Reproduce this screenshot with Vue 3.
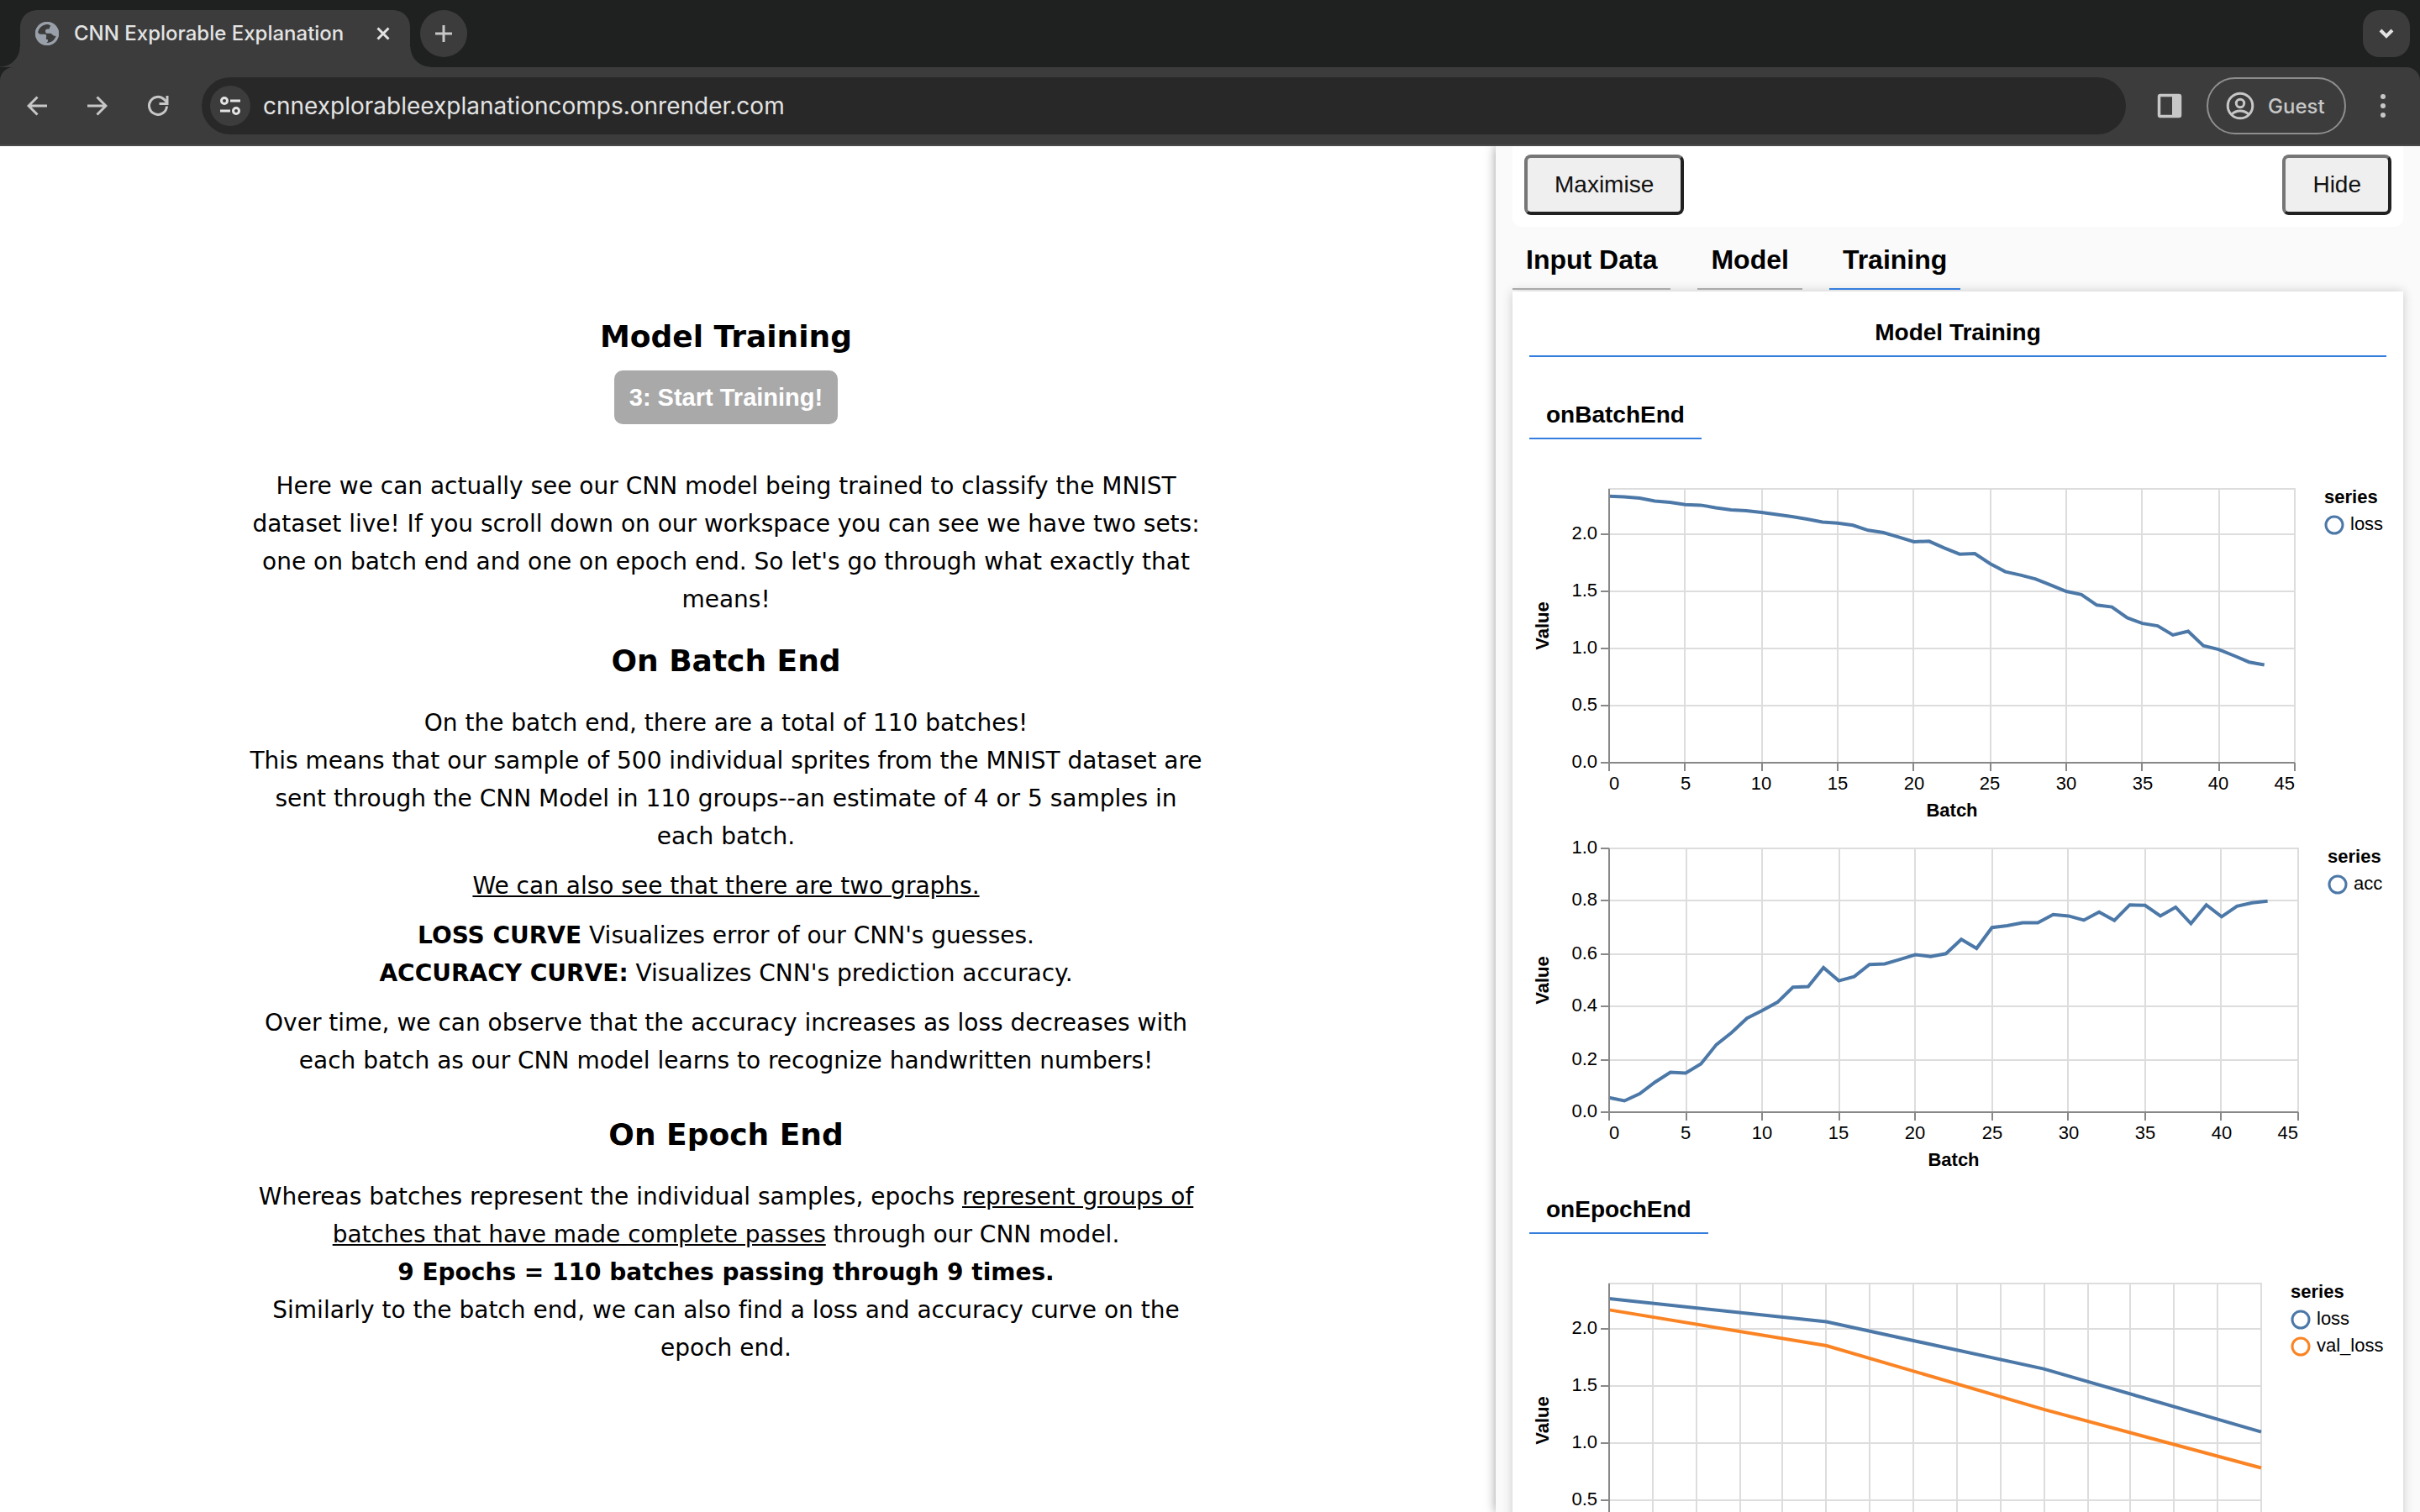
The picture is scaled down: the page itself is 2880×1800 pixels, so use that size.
<script setup>
import { ref } from 'vue'

const BLUE = '#4c78a8'
const ORANGE = '#fa8424'

const tabs = ['Input Data', 'Model', 'Training']
const activeTab = ref('Training')

const lossPerBatch = [
  2.336, 2.331, 2.319, 2.294, 2.282, 2.262, 2.257, 2.235, 2.216, 2.208, 2.194,
  2.176, 2.157, 2.135, 2.11, 2.1, 2.081, 2.037, 2.017, 1.978, 1.936, 1.941,
  1.882, 1.828, 1.833, 1.745, 1.674, 1.645, 1.61, 1.556, 1.502, 1.473, 1.382,
  1.365, 1.27, 1.221, 1.199, 1.12, 1.152, 1.025, 0.993, 0.939, 0.882, 0.858,
]
const accPerBatch = [
  0.055, 0.043, 0.07, 0.114, 0.151, 0.148, 0.183, 0.256, 0.302, 0.356, 0.385,
  0.417, 0.474, 0.476, 0.548, 0.498, 0.514, 0.56, 0.562, 0.579, 0.597, 0.59,
  0.601, 0.655, 0.621, 0.7, 0.707, 0.718, 0.718, 0.749, 0.744, 0.728, 0.759,
  0.727, 0.786, 0.784, 0.744, 0.777, 0.715, 0.786, 0.741, 0.781, 0.794, 0.8,
]

const LEFT = 95
const TOP = 20

function range(count, step, start = 0) {
  return Array.from({ length: count }, (_, i) => start + i * step)
}

/* Turns a chart description into plot coordinates. */
function buildChart({ width, height, xMax, yMax, xTicks, yTicks, xTitle, series }) {
  const snap = (v) => 2 * Math.round(v / 2)
  return {
    xTitle,
    width,
    height,
    right: LEFT + width,
    bottom: TOP + height,
    viewHeight: TOP + height + 82,
    xTicks: xTicks.map((v, i) => ({
      x: LEFT + snap((v / xMax) * width),
      labelX: Math.round(LEFT + (v / xMax) * width),
      text: String(v),
      anchor: i === 0 ? 'start' : i === xTicks.length - 1 ? 'end' : 'middle',
    })),
    yTicks: yTicks.map((v) => ({
      y: TOP + snap(height - (v / yMax) * height),
      text: v.toFixed(1),
    })),
    series: series.map((s) => ({
      name: s.name,
      color: s.color,
      points: s.values
        .map((v, i) => `${(LEFT + (i / xMax) * width).toFixed(1)},${(TOP + height - (v / yMax) * height).toFixed(1)}`)
        .join(' '),
    })),
  }
}

const groups = [
  {
    name: 'onBatchEnd',
    charts: [
      buildChart({
        width: 816, height: 326, xMax: 45, yMax: 2.4, xTitle: 'Batch',
        xTicks: range(10, 5), yTicks: range(5, 0.5),
        series: [{ name: 'loss', color: BLUE, values: lossPerBatch }],
      }),
      buildChart({
        width: 820, height: 314, xMax: 45, yMax: 1, xTitle: 'Batch',
        xTicks: range(10, 5), yTicks: range(6, 0.2),
        series: [{ name: 'acc', color: BLUE, values: accPerBatch }],
      }),
    ],
  },
  {
    name: 'onEpochEnd',
    charts: [
      buildChart({
        width: 776, height: 326, xMax: 3, yMax: 2.4, xTitle: '',
        xTicks: range(16, 0.2), yTicks: range(4, 0.5, 0.5),
        series: [
          { name: 'loss', color: BLUE, values: [2.267, 2.064, 1.652, 1.1] },
          { name: 'val_loss', color: ORANGE, values: [2.169, 1.855, 1.297, 0.784] },
        ],
      }),
    ],
  },
]
</script>

<template>
  <div class="window">
    <header class="chrome">
      <div class="tab-strip">
        <div class="browser-tab">
          <svg class="favicon" viewBox="0 0 28 28" aria-hidden="true">
            <circle cx="14" cy="14" r="14" fill="#9aa0a9" />
            <path d="M15.500 2.500C10 2.500 5 6 3 11.500c0 2 1.500 3.200 4 3.200h4.200c1.600 0 2.200 1 2 2.300l-.4 2.400c0 1 .6 1.500 1.500 1.500h.6v2.600l-1.700 1.700c5.500.4 10.500-3.200 12-8.700-1.400.8-3.500.4-4.600-1-.8-1.200-2-1.700-3.600-1.700h-2.300c-1.700 0-2.700-1-2.700-2.600s.9-2.600 2.500-2.600h.8c1.200 0 1.800-.7 1.800-1.700s.7-1.600 1.500-1.800z" fill="#3c3c3c" />
            <circle cx="14" cy="14" r="12.500" fill="none" stroke="#9aa0a9" stroke-width="3" />
          </svg>
          <span class="tab-title">CNN Explorable Explanation</span>
          <button class="icon-button close" aria-label="Close tab">
            <svg viewBox="0 0 16 16" width="16" height="16"><path d="M1.500 1.500l13 13M14.500 1.500l-13 13" stroke="#e3e3e3" stroke-width="3" /></svg>
          </button>
        </div>
        <button class="icon-button new-tab" aria-label="New tab">
          <svg viewBox="0 0 20 20" width="20" height="20"><path d="M10 0v20M0 10h20" stroke="#c7c7c7" stroke-width="3" /></svg>
        </button>
        <button class="icon-button tab-search" aria-label="Search tabs">
          <svg viewBox="0 0 20 14" width="20" height="14"><path d="M3 3l7 7 7-7" fill="none" stroke="#e3e3e3" stroke-width="4" /></svg>
        </button>
      </div>
      <div class="toolbar">
        <button class="icon-button nav" aria-label="Back">
          <svg viewBox="0 0 24 24" width="24" height="24"><path d="M24 12H2M12.500 1.500L2 12l10.500 10.500" fill="none" stroke="#c7c7c7" stroke-width="3" /></svg>
        </button>
        <button class="icon-button nav" aria-label="Forward">
          <svg viewBox="0 0 24 24" width="24" height="24"><path d="M0 12h22M11.500 1.500L22 12 11.500 22.500" fill="none" stroke="#c7c7c7" stroke-width="3" /></svg>
        </button>
        <button class="icon-button nav" aria-label="Reload">
          <svg viewBox="0 0 26 26" width="26" height="26">
            <path d="M23.500 13.500A10.500 10.500 0 1 1 20.500 5.500L23.500 8.500" fill="none" stroke="#c7c7c7" stroke-width="3" />
            <path d="M24 1v9.500h-9.500" fill="none" stroke="#c7c7c7" stroke-width="3" />
          </svg>
        </button>
        <div class="omnibox">
          <button class="icon-button site-info" aria-label="View site information">
            <svg viewBox="0 0 24 22" width="24" height="22" fill="none" stroke="#e3e3e3" stroke-width="3">
              <circle cx="5" cy="5" r="3.500" /><path d="M12 5h12M0 17h12" />
              <circle cx="19" cy="17" r="3.500" />
            </svg>
          </button>
          <input class="url" type="text" aria-label="Address" value="cnnexplorableexplanationcomps.onrender.com" />
        </div>
        <button class="icon-button side-panel" aria-label="Show side panel">
          <svg viewBox="0 0 30 30" width="30" height="30">
            <rect x="2.500" y="2.500" width="25" height="25" rx="1.500" fill="none" stroke="#c7c7c7" stroke-width="3.500" />
            <rect x="18" y="2" width="10" height="26" fill="#c7c7c7" />
          </svg>
        </button>
        <button class="guest">
          <svg viewBox="0 0 34 34" width="34" height="34" fill="none" stroke="#c7c7c7" stroke-width="3">
            <circle cx="17" cy="17" r="14.800" />
            <circle cx="17" cy="14" r="4.700" />
            <path d="M7 27c5.500-5.300 14.500-5.300 20 0" />
          </svg>
          <span>Guest</span>
        </button>
        <button class="icon-button menu" aria-label="Menu">
          <svg viewBox="0 0 8 28" width="8" height="28" fill="#c7c7c7">
            <circle cx="4" cy="3" r="3" /><circle cx="4" cy="14" r="3" /><circle cx="4" cy="25" r="3" />
          </svg>
        </button>
      </div>
    </header>

    <div class="page">
      <main class="lesson">
        <h2>Model Training</h2>
        <button class="start">3: Start Training!</button>
        <p class="intro">
          Here we can actually see our CNN model being trained to classify the MNIST dataset live! If
          you scroll down on our workspace you can see we have two sets: one on batch end and one on
          epoch end. So let's go through what exactly that means!
        </p>
        <h2 class="batch-heading">On Batch End</h2>
        <p>
          On the batch end, there are a total of 110 batches!<br />
          This means that our sample of 500 individual sprites from the MNIST dataset are sent through
          the CNN Model in 110 groups--an estimate of 4 or 5 samples in each batch.
        </p>
        <p><u>We can also see that there are two graphs.</u></p>
        <p>
          <b>LOSS CURVE</b> Visualizes error of our CNN's guesses.<br />
          <b>ACCURACY CURVE:</b> Visualizes CNN's prediction accuracy.
        </p>
        <p>
          Over time, we can observe that the accuracy increases as loss decreases with each batch as
          our CNN model learns to recognize handwritten numbers!
        </p>
        <h2 class="epoch-heading">On Epoch End</h2>
        <p>
          Whereas batches represent the individual samples, epochs
          <u>represent groups of batches that have made complete passes</u> through our CNN model.<br />
          <b>9 Epochs = 110 batches passing through 9 times.</b><br />
          Similarly to the batch end, we can also find a loss and accuracy curve on the epoch end.
        </p>
      </main>

      <aside class="visor">
        <div class="visor-controls">
          <button>Maximise</button>
          <button>Hide</button>
        </div>
        <nav class="visor-tabs">
          <a
            v-for="tab in tabs"
            :key="tab"
            href="#"
            :class="{ active: tab === activeTab }"
            @click.prevent="activeTab = tab"
          >{{ tab }}</a>
        </nav>
        <div class="surface">
          <h3 class="surface-title">Model Training</h3>
          <section v-for="group in groups" :key="group.name" class="group">
            <h4>{{ group.name }}</h4>
            <svg
              v-for="(chart, index) in group.charts"
              :key="index"
              class="chart"
              :viewBox="`0 0 1020 ${chart.viewHeight}`"
            >
              <g class="grid">
                <path v-for="t in chart.xTicks" :key="t.x" :d="`M${t.x} ${TOP}V${chart.bottom}`" />
                <path v-for="t in chart.yTicks" :key="t.y" :d="`M${LEFT} ${t.y}H${chart.right}`" />
                <path :d="`M${LEFT - 1} ${TOP}H${chart.right + 1}`" />
              </g>
              <polyline
                v-for="s in chart.series"
                :key="s.name"
                class="line"
                :points="s.points"
                :stroke="s.color"
              />
              <g class="axis">
                <path v-for="t in chart.xTicks" :key="t.x" :d="`M${t.x} ${chart.bottom}v10`" />
                <path v-for="t in chart.yTicks" :key="t.y" :d="`M${LEFT} ${t.y}h-10`" />
                <path :d="`M${LEFT} ${TOP}V${chart.bottom}H${chart.right}`" />
              </g>
              <g v-if="chart.xTitle">
                <text
                  v-for="t in chart.xTicks"
                  :key="t.text"
                  :x="t.labelX"
                  :y="chart.bottom + 32"
                  :text-anchor="t.anchor"
                >{{ t.text }}</text>
                <text class="title" :x="LEFT + chart.width / 2" :y="chart.bottom + 64" text-anchor="middle">{{ chart.xTitle }}</text>
              </g>
              <text
                v-for="t in chart.yTicks"
                :key="t.text"
                :x="LEFT - 14"
                :y="t.y + 6"
                text-anchor="end"
              >{{ t.text }}</text>
              <text
                class="title"
                text-anchor="middle"
                :transform="`translate(${LEFT - 72} ${TOP + chart.height / 2}) rotate(-90)`"
              >Value</text>
              <text class="title" :x="chart.right + 35" :y="TOP + 17">series</text>
              <g v-for="(s, i) in chart.series" :key="s.name">
                <circle :cx="chart.right + 47" :cy="TOP + 43 + i * 32" r="10" fill="none" :stroke="s.color" stroke-width="3" />
                <text :x="chart.right + 66" :y="TOP + 49 + i * 32">{{ s.name }}</text>
              </g>
            </svg>
          </section>
        </div>
      </aside>
    </div>
  </div>
</template>

<style>
body {
  margin: 0;
  background: #fff;
}
</style>

<style scoped>
.window {
  display: flex;
  flex-direction: column;
  height: 100vh;
  overflow: hidden;
  color: #000;
}

button {
  margin: 0;
  padding: 0;
  border: 0;
  background: none;
  font-family: inherit;
}

/* Browser chrome */
.chrome {
  position: relative;
  z-index: 1;
  flex: none;
  background: #1f2120;
  font-family: Inter, sans-serif;
}

.icon-button {
  display: flex;
  align-items: center;
  justify-content: center;
  flex: none;
}

.tab-strip {
  display: flex;
  align-items: center;
  height: 80px;
  padding: 0 12px 0 24px;
}

.browser-tab {
  position: relative;
  display: flex;
  align-items: center;
  box-sizing: border-box;
  width: 464px;
  height: 68px;
  margin-top: 12px;
  padding: 0 24px 12px 18px;
  border-radius: 20px 20px 0 0;
  background: #3c3c3c;
}

.browser-tab::before,
.browser-tab::after {
  content: '';
  position: absolute;
  bottom: 0;
  width: 24px;
  height: 24px;
}

.browser-tab::before {
  right: 100%;
  background: radial-gradient(circle at 0 0, transparent 23px, #3c3c3c 24px);
}

.browser-tab::after {
  left: 100%;
  background: radial-gradient(circle at 100% 0, transparent 23px, #3c3c3c 24px);
}

.favicon {
  width: 28px;
  height: 28px;
  margin-right: 18px;
}

.tab-title {
  flex: 1;
  color: #e3e3e3;
  font-size: 24px;
  font-weight: 500;
  line-height: 32px;
  white-space: nowrap;
}

.close {
  width: 16px;
}

.new-tab {
  width: 56px;
  height: 56px;
  margin-left: 12px;
  border-radius: 50%;
  background: #3c3c3c;
}

.tab-search {
  width: 56px;
  height: 56px;
  margin-left: auto;
  border-radius: 20px;
  background: #3c3c3c;
}

.toolbar {
  display: flex;
  align-items: center;
  height: 92px;
  padding: 0 40px 0 8px;
  border-bottom: 2px solid #4a4a4a;
  border-radius: 16px 16px 0 0;
  background: #3c3c3c;
}

.nav {
  width: 72px;
  height: 68px;
}

.omnibox {
  display: flex;
  flex: 1;
  align-items: center;
  height: 68px;
  margin-left: 16px;
  border-radius: 34px;
  background: #282828;
}

.site-info {
  width: 48px;
  height: 48px;
  margin: 0 15px 0 10px;
  border-radius: 50%;
  background: #3c3c3c;
}

.url {
  flex: 1;
  padding: 0;
  border: 0;
  outline: 0;
  background: none;
  color: #e3e3e3;
  font-family: inherit;
  font-size: 28px;
  line-height: 36px;
}

.side-panel {
  width: 30px;
  margin: 0 29px 0 37px;
}

.guest {
  display: flex;
  align-items: center;
  gap: 16px;
  box-sizing: border-box;
  width: 166px;
  height: 68px;
  margin-right: 40px;
  padding-left: 21px;
  border: 2px solid #8e8e8e;
  border-radius: 34px;
  color: #c7c7c7;
  font-size: 24px;
  font-weight: 500;
}

.menu {
  width: 8px;
}

/* Lesson text */
.page {
  display: flex;
  flex: 1;
  min-height: 0;
}

.lesson {
  flex: 1;
  min-width: 0;
  padding: 198px 348px 0 296px;
  font-family: Verdana, 'DejaVu Sans', sans-serif;
  font-size: 28px;
  font-variant-ligatures: none;
  line-height: 45px;
  text-align: center;
}

.lesson h2 {
  margin: 0;
  font-size: 36px;
  line-height: 58px;
}

.lesson p {
  margin: 14px 0 0;
}

.lesson .batch-heading {
  margin-top: 22px;
}

.lesson .epoch-heading {
  margin-top: 37px;
}

.lesson h2 + p {
  margin-top: 22px;
}

.lesson .intro {
  margin-top: 51px;
}

.start {
  display: block;
  height: 64px;
  margin: 11px auto 0;
  padding: 0 18px;
  border-radius: 10px;
  background: #a9a9a9;
  color: #fff;
  font-family: Arial, 'Liberation Sans', sans-serif;
  font-size: 29px;
  font-weight: 700;
}

/* Training visor */
.visor {
  flex: none;
  box-sizing: border-box;
  width: 1100px;
  padding: 0 20px;
  background: #fafafa;
  box-shadow: 0 0 12px rgba(0, 0, 0, 0.4);
  font-family: Helvetica, 'Liberation Sans', sans-serif;
}

.visor-controls {
  display: flex;
  justify-content: space-between;
  padding: 10px 14px 14px;
  border-radius: 0 0 10px 10px;
  background: #fff;
}

.visor-controls button {
  height: 72px;
  padding: 0 32px;
  border: 4px solid;
  border-color: #767676 #212121 #212121 #767676;
  border-radius: 8px;
  background: #efefef;
  color: #111;
  font-size: 28px;
}

.visor-tabs {
  display: flex;
  gap: 32px;
  padding-bottom: 2px;
}

.visor-tabs a {
  padding: 21px 16px 16px;
  border-bottom: 2px solid #aaa;
  color: #000;
  font-size: 32px;
  font-weight: 700;
  line-height: 36px;
  text-decoration: none;
}

.visor-tabs .active {
  border-color: #357edd;
}

.surface {
  padding: 20px;
  background: #fff;
  box-shadow: 0 0 12px rgba(0, 0, 0, 0.2);
}

.surface-title {
  margin: 0 0 35px;
  padding: 13px 0 11px;
  border-bottom: 2px solid #357edd;
  font-size: 28px;
  line-height: 32px;
  text-align: center;
}

.group {
  display: flex;
  flex-direction: column;
  align-items: flex-start;
  padding-top: 18px;
}

.group h4 {
  margin: 0 0 39px;
  padding: 0 20px 11px;
  border-bottom: 2px solid #357edd;
  font-size: 28px;
  line-height: 32px;
}

.chart {
  display: block;
  width: 100%;
  font-size: 22px;
}

.chart .title {
  font-weight: 700;
}

.grid {
  fill: none;
  stroke: #ddd;
  stroke-width: 2px;
}

.axis {
  fill: none;
  stroke: #888;
  stroke-width: 2px;
}

.line {
  fill: none;
  stroke-width: 4px;
}
</style>
